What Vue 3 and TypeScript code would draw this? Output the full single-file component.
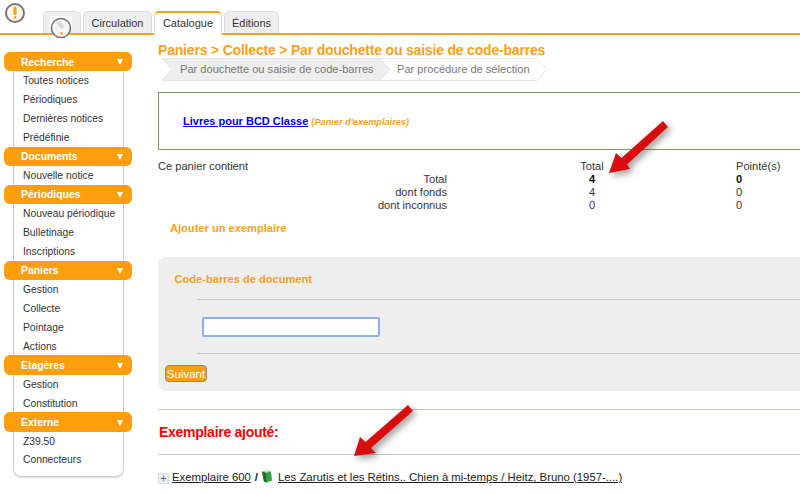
<script setup lang="ts">
const tabs = [
  { label: 'Circulation', w: 69, active: false },
  { label: 'Catalogue', w: 68, active: true },
  { label: 'Éditions', w: 55, active: false },
]
const groups = [
  { title: 'Recherche', items: ['Toutes notices', 'Périodiques', 'Dernières notices', 'Prédéfinie'] },
  { title: 'Documents', items: ['Nouvelle notice'] },
  { title: 'Périodiques', items: ['Nouveau périodique', 'Bulletinage', 'Inscriptions'] },
  { title: 'Paniers', items: ['Gestion', 'Collecte', 'Pointage', 'Actions'] },
  { title: 'Etagères', items: ['Gestion', 'Constitution'] },
  { title: 'Externe', items: ['Z39.50', 'Connecteurs'] },
]
const rows = [
  { label: 'Total', a: '4', b: '0', strong: true },
  { label: 'dont fonds', a: '4', b: '0', strong: false },
  { label: 'dont inconnus', a: '0', b: '0', strong: false },
]
</script>

<template>
  <div class="page">
    <header class="top">
      <svg class="logo" width="22" height="22" viewBox="0 0 22 22">
        <circle cx="11" cy="11" r="9" fill="#fdf8ec" stroke="#777" stroke-width="2" />
        <path d="M11 6v5.500" stroke="#f90" stroke-width="3" stroke-linecap="round" />
        <circle cx="11" cy="15.500" r="1.300" fill="#f90" />
      </svg>
      <nav class="tabs">
        <div class="tab tab-home">
          <svg class="home-icon" width="24" height="24" viewBox="0 0 24 24">
            <rect x="0" y="0" width="22" height="12" fill="#fff" />
            <circle cx="11" cy="12" r="9.500" fill="#f6f6f6" stroke="#777" stroke-width="1.600" />
            <path d="M6 6.500l5 6.500 3.500-2-4.500-6.500z" fill="#dcdcdc" />
            <circle cx="11.500" cy="17.500" r="1.200" fill="#f90" />
          </svg>
        </div>
        <div
          v-for="t in tabs"
          :key="t.label"
          class="tab"
          :class="{ active: t.active }"
          :style="{ width: t.w + 'px' }"
        >{{ t.label }}</div>
      </nav>
    </header>

    <div class="body">
      <aside class="side">
        <div class="side-box" />
        <section v-for="g in groups" :key="g.title" class="group">
          <div class="group-head">
            <span>{{ g.title }}</span>
            <i class="tri" />
          </div>
          <ul class="group-list">
            <li v-for="it in g.items" :key="it">{{ it }}</li>
          </ul>
        </section>
      </aside>

      <main class="main">
        <h1 class="title">Paniers &gt; Collecte &gt; Par douchette ou saisie de code-barres</h1>
        <div class="steps">
          <svg class="steps-bg" width="400" height="23" viewBox="0 0 400 23">
            <path d="M4 .5H222L232 11.500 222 22.500H4L14 11.500Z" fill="#eee" stroke="#e6e6e6" />
            <path d="M222 .5H379L389 11.500 379 22.500H222L232 11.500Z" fill="#fff" stroke="#e6e6e6" />
          </svg>
          <span class="step step-a">Par douchette ou saisie de code-barres</span>
          <span class="step step-b">Par procédure de sélection</span>
        </div>

        <div class="cart">
          <a class="cart-link">Livres pour BCD Classe</a>
          <em class="cart-type">(Panier d'exemplaires)</em>
        </div>

        <div class="stats">
          <div class="stats-cap">Ce panier contient</div>
          <div class="stats-num">Total</div>
          <div class="stats-pt">Pointé(s)</div>
          <template v-for="r in rows" :key="r.label">
            <div class="stats-label">{{ r.label }}</div>
            <div class="stats-num" :class="{ strong: r.strong }">{{ r.a }}</div>
            <div class="stats-pt" :class="{ strong: r.strong }">{{ r.b }}</div>
          </template>
        </div>

        <h2 class="add">Ajouter un exemplaire</h2>

        <form class="form" @submit.prevent>
          <label class="form-label">Code-barres de document</label>
          <hr class="form-rule" />
          <input class="form-input" type="text" />
          <hr class="form-rule" />
          <button class="submit" type="button">Suivant</button>
        </form>

        <hr class="rule first" />
        <h2 class="added">Exemplaire ajouté:</h2>
        <hr class="rule" />
        <div class="result">
          <span class="plus">+</span>
          <a class="result-link">Exemplaire 600</a>
          <b class="sep">/</b>
          <svg class="book" width="12" height="13" viewBox="0 0 12 13">
            <path d="M1 1.500 6.500 .5 10 1.500 11 10.500 5.500 12.500 3 11.500z" fill="#35a040" />
            <path d="M1 1.500 5 3 5.500 12.500 3 11.500z" fill="#1c6a28" />
            <path d="M1.500 1.400 6.500 .8 9.500 1.500 5 2.700z" fill="#c4e8bd" />
          </svg>
          <a class="result-link title-link">Les Zarutis et les Rétins.. Chien à mi-temps / Heitz, Bruno (1957-....)</a>
        </div>
      </main>
    </div>

    <svg class="arrows" width="800" height="494" viewBox="0 0 800 494">
      <defs>
        <filter id="arrow-shadow" x="-30%" y="-30%" width="170%" height="170%">
          <feDropShadow dx="3" dy="3" stdDeviation="3.500" flood-color="#000" flood-opacity=".4" />
        </filter>
      </defs>
      <g fill="#d80d0d" filter="url(#arrow-shadow)">
        <path d="M609 173 616 153 621.500 158 663 121 668 127 627 164.500 630 169Z" />
        <path d="M354 456 360 437 365.500 442 408 405 413 411 371 448 376 453Z" />
      </g>
    </svg>
  </div>
</template>

<style>
html, body { margin: 0; background: #fff; }
</style>

<style scoped>
.page {
  position: relative;
  width: 800px;
  height: 494px;
  overflow: hidden;
  background: #fff;
  font-family: "Liberation Sans", Arial, sans-serif;
  font-size: 11.100px;
  color: #333;
}
.top {
  position: relative;
  height: 35px;
  box-sizing: border-box;
  border-bottom: 2px solid #f9a11b;
  padding-left: 43px;
}
.logo { position: absolute; left: 4px; top: 2px; }
.tabs { display: flex; gap: 2px; height: 33px; padding-top: 11px; box-sizing: border-box; }
.tab {
  box-sizing: border-box;
  height: 22px;
  background: #eee;
  border: 1px solid #ddd;
  border-bottom: 0;
  border-radius: 5px 5px 0 0;
  text-align: center;
  line-height: 22px;
  color: #333;
  font-size: 11px;
}
.tab.active {
  position: relative;
  height: 24px;
  background: #fff;
  border: 1px solid #ddd;
  border-top: 2px solid #f9a11b;
  border-bottom: 0;
  line-height: 21px;
  z-index: 1;
}
.tab-home { position: relative; width: 38px; }
.home-icon { position: absolute; left: 6px; top: 4px; }
.body { display: flex; }
.side {
  position: relative;
  box-sizing: border-box;
  width: 158px;
  padding: 17px 0 0 4px;
  flex: none;
}
.side-box {
  position: absolute;
  left: 13px;
  top: 27px;
  width: 111px;
  height: 415px;
  box-sizing: border-box;
  border: 1px solid #ccc;
  border-top: 0;
  border-radius: 0 0 8px 8px;
  box-shadow: 0 1px 1px #ddd;
}
.group { position: relative; width: 128px; }
.group-head {
  display: flex;
  align-items: center;
  justify-content: space-between;
  box-sizing: border-box;
  height: 19.200px;
  padding: 1px 9px 0 17px;
  background: #fd9f0d;
  border-radius: 6px;
  color: #fff;
  font-weight: 700;
  font-size: 10.400px;
}
.tri {
  width: 0;
  height: 0;
  border-left: 3.500px solid transparent;
  border-right: 3.500px solid transparent;
  border-top: 6px solid #fff;
}
.group-list {
  list-style: none;
  margin: 0;
  padding: 0 0 0 19px;
  color: #333;
  font-size: 10.300px;
}
.group-list li { height: 18.900px; line-height: 20px; white-space: nowrap; }
.main { flex: 1; min-width: 0; padding-top: 7px; }
.title {
  margin: 0;
  font-size: 14px;
  letter-spacing: -0.190px;
  line-height: 16px;
  font-weight: 700;
  color: #fb9f1e;
  white-space: nowrap;
}
.steps { position: relative; height: 23px; color: #777; }
.steps-bg { position: absolute; left: 0; top: 0; }
.step { position: absolute; top: 0; line-height: 23px; white-space: nowrap; }
.step-a { left: 22px; }
.step-b { left: 239px; }
.cart {
  box-sizing: border-box;
  height: 58px;
  margin-top: 11px;
  padding: 21px 0 0 24px;
  border: 1px solid #7f9f5f;
  border-right: 0;
  line-height: 15px;
  white-space: nowrap;
}
.cart-link { color: #00d; font-weight: 700; text-decoration: underline; font-size: 11px; }
.cart-type { margin-left: 3px; color: #fb9f1e; font-weight: 700; font-size: 9.200px; }
.stats {
  display: grid;
  grid-template-columns: 289px 156px 200px;
  grid-template-rows: repeat(4, 13px);
  margin-top: 10px;
  line-height: 13px;
  color: #333;
}
.stats-cap { text-align: left; }
.stats-label { text-align: right; }
.stats-num { text-align: center; margin-left: 133px; width: 24px; white-space: nowrap; }
.stats-pt { grid-column: 3; margin-left: 133px; white-space: nowrap; }
.strong { font-weight: 700; color: #111; }
.add {
  margin: 10px 0 0 12px;
  font-size: 11.100px;
  line-height: 13px;
  font-weight: 700;
  color: #fb9f1e;
}
.form {
  box-sizing: border-box;
  height: 134px;
  margin-top: 22px;
  padding: 16px 0 0 0;
  background: #eee;
  border-radius: 8px 0 0 8px;
}
.form-label {
  display: block;
  margin-left: 16.500px;
  font-size: 11.100px;
  line-height: 13px;
  font-weight: 700;
  color: #fb9f1e;
}
.form-rule {
  height: 0;
  margin: 0 0 0 39px;
  border: 0;
  border-top: 1px solid #c8c8c8;
}
.form-label + .form-rule { margin-top: 13px; }
.form-input {
  display: block;
  box-sizing: border-box;
  width: 178px;
  height: 20px;
  margin: 17px 0 16px 44px;
  padding: 0;
  background: #fff;
  border: 2px solid #8fb0e8;
  border-radius: 2px;
  outline: 0;
}
.submit {
  display: block;
  box-sizing: border-box;
  width: 42px;
  height: 17px;
  margin: 11px 0 0 7px;
  padding: 0;
  background: #fd9f0d;
  border: 1px solid #888;
  border-radius: 4px;
  color: #fff;
  font: 11.500px "Liberation Sans", Arial, sans-serif;
}
.rule {
  height: 0;
  margin: 0;
  border: 0;
  border-top: 1px solid #d0c8bc;
}
.rule.first { margin-top: 18px; }
.added {
  margin: 14px 0 13px 1px;
  font-size: 14px;
  letter-spacing: -0.280px;
  line-height: 17px;
  font-weight: 700;
  color: #f00;
}
.result {
  display: flex;
  align-items: center;
  height: 16px;
  margin-top: 14px;
  font-size: 11.350px;
  white-space: nowrap;
}
.plus {
  box-sizing: border-box;
  width: 11px;
  height: 11px;
  margin-right: 3px;
  margin-top: 3px;
  background: #e4ecf4;
  border: 1px solid #ddd;
  color: #666;
  font-size: 11px;
  line-height: 9px;
  text-align: center;
}
.result-link { color: #222; text-decoration: underline; }
.sep { margin: 0 3px 0 4px; color: #222; }
.book { margin-right: 5px; margin-top: -2px; }
.arrows { position: absolute; left: 0; top: 0; pointer-events: none; }
</style>
